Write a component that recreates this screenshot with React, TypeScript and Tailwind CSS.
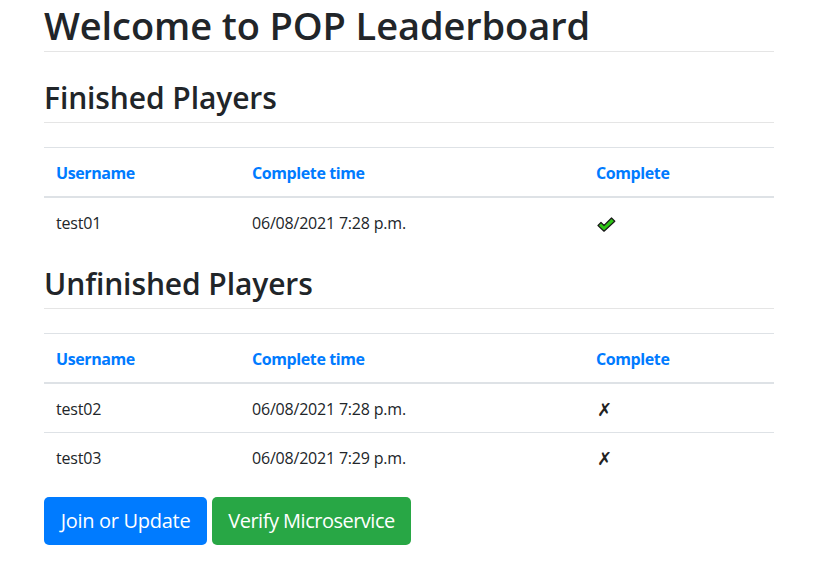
const finished = [{ user: "test01", time: "06/08/2021 7:28 p.m.", done: true }];

const unfinished = [
  { user: "test02", time: "06/08/2021 7:28 p.m.", done: false },
  { user: "test03", time: "06/08/2021 7:29 p.m.", done: false }
];

type Row = { user: string; time: string; done: boolean };

const CheckMark = () => (
  <svg className="h-[15px] w-[19px]" viewBox="0 0 19 15" fill="none" xmlns="http://www.w3.org/2000/svg">
    <path
      d="M1 8.5 4 5.5 7 8.5 14.5 1 17.8 4.2 7 14.2Z"
      fill="#2ec516"
      stroke="#1a1a1a"
      strokeWidth={1.2}
      strokeLinejoin="round"
    />
  </svg>
);

const cols = "grid grid-cols-[196px_344px_190px]";

const PlayerTable = ({ rows }: { rows: Row[] }) => (
  <div className="mt-6 border-t border-[#dee2e6] text-base">
    <div className={`${cols} h-[50px] items-center border-b-2 border-[#dee2e6] pt-[1px] font-bold tracking-[-0.4px] text-[#007bff]`}>
      <div className="px-3">Username</div>
      <div className="px-3">Complete time</div>
      <div className="px-3">Complete</div>
    </div>
    {rows.map((r, i) => (
      <div
        key={r.user}
        className={`${cols} items-center pt-[1px] tracking-[-0.2px] ${i > 0 ? "h-[49px] border-t border-[#dee2e6]" : "h-[48px]"}`}
      >
        <div className="px-3">{r.user}</div>
        <div className="px-3">{r.time}</div>
        <div className="flex px-3">
          {r.done ? (
            <span className="inline-flex pl-[1px] pt-[3px]">
              <CheckMark />
            </span>
          ) : (
            <span className="pl-[1px] pt-[2px] font-['DejaVu_Sans',sans-serif] text-[18px] text-[#222]">✗</span>
          )}
        </div>
      </div>
    ))}
  </div>
);

export default function App() {
  return (
    <div className="min-h-[582px] w-[822px] bg-white font-['Open_Sans','Noto_Sans',sans-serif] text-[#212529]">
      <div className="ml-[44px] w-[730px]">
        <h1 className="h-[52px] border-b border-[#e5e5e5] pt-[1px] text-[38px] font-semibold leading-[48px] tracking-[-0.1px]">
          Welcome to POP Leaderboard
        </h1>

        <h2 className="mt-[26px] h-[45px] border-b border-[#e5e5e5] pt-[1px] text-[30px] font-semibold leading-[38px] tracking-[-0.1px]">
          Finished Players
        </h2>
        <PlayerTable rows={finished} />

        <h2 className="mt-[18px] h-[45px] border-b border-[#e5e5e5] pt-[1px] text-[30px] font-semibold leading-[38px] tracking-[-0.1px]">
          Unfinished Players
        </h2>
        <PlayerTable rows={unfinished} />

        <div className="mt-4 flex gap-[5px]">
          <button className="h-[48px] w-[163px] rounded-[5px] bg-[#007bff] text-[20px] leading-[30px] tracking-[-0.3px] text-white">
            Join or Update
          </button>
          <button className="h-[48px] w-[199px] rounded-[5px] bg-[#28a745] text-[20px] leading-[30px] tracking-[-0.5px] text-white">
            Verify Microservice
          </button>
        </div>
      </div>
    </div>
  );
}
